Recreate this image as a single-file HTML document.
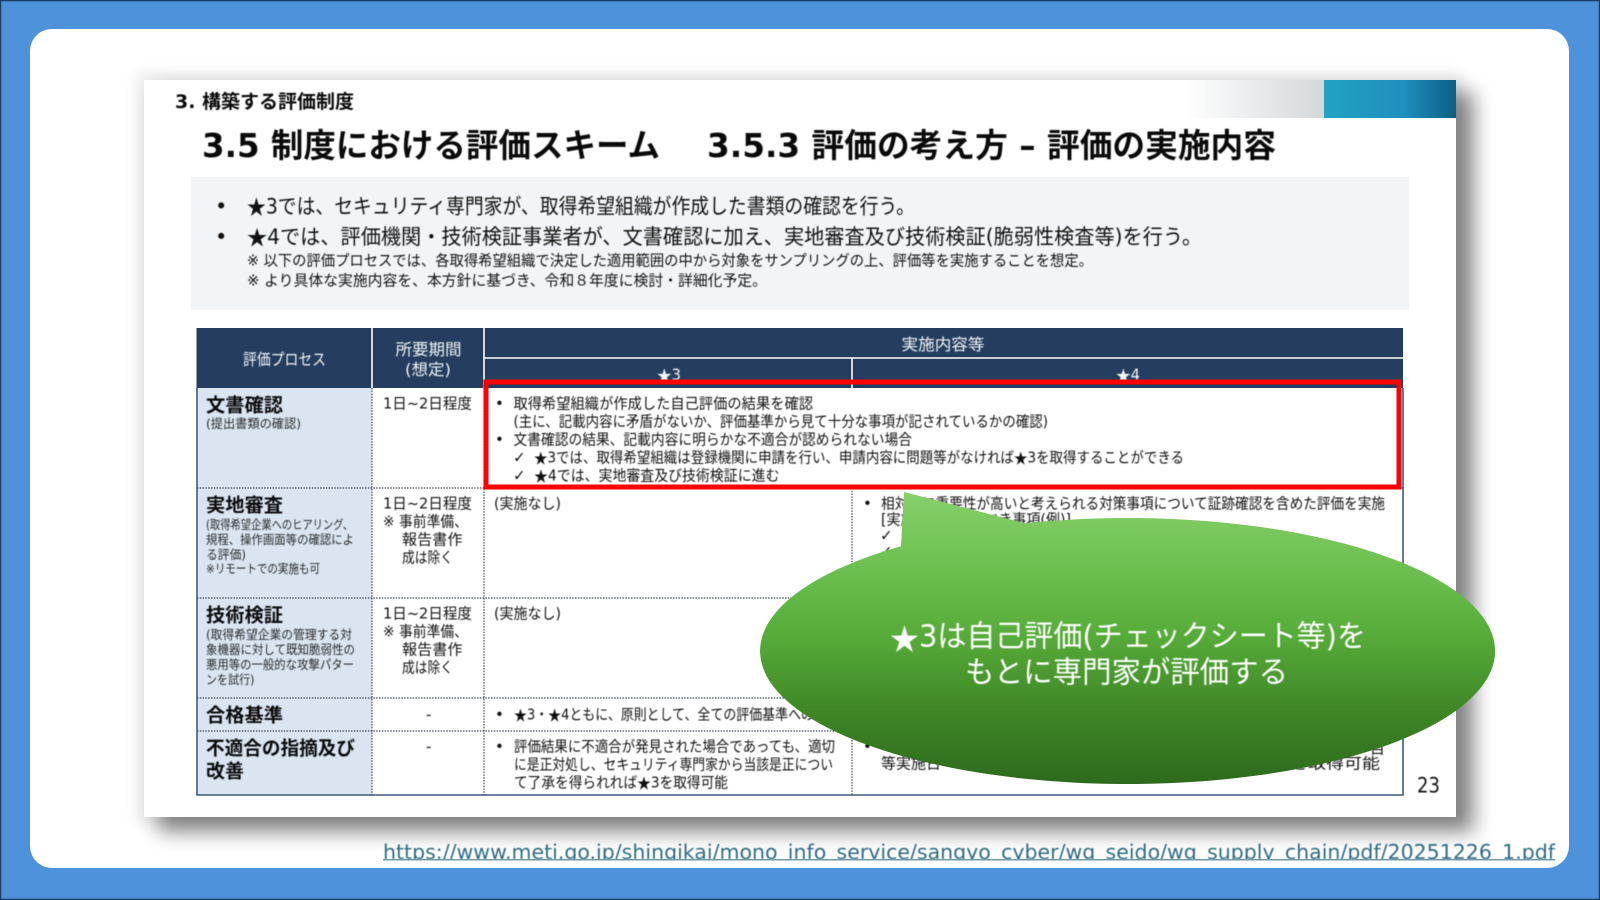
<!DOCTYPE html>
<html lang="ja"><head><meta charset="utf-8"><title>評価スキーム</title>
<style>
html,body{margin:0;padding:0;background:#4d92da}
svg{display:block}
text{font-family:"DejaVu Sans","Noto Sans CJK JP",sans-serif;fill:#111;white-space:pre}
.b{font-weight:700;fill:#0a0a0a}
.s{fill:#2a2a2a}
.w{fill:#f2f5f8}
.wb{fill:#fff}
.u{font-family:"DejaVu Sans",sans-serif;fill:#2f6b82}
.soft{filter:blur(.4px)}
tspan.n{font-family:"Noto Sans CJK JP",sans-serif}
</style></head><body>
<svg width="1600" height="900" viewBox="0 0 1600 900" xmlns="http://www.w3.org/2000/svg">
<defs>
<linearGradient id="gh" x1="0" x2="1" y1="0" y2="0"><stop offset="0" stop-color="#fff"/><stop offset="1" stop-color="#d4d7da"/></linearGradient>
<linearGradient id="gt" x1="0" x2="1" y1="0" y2="0"><stop offset="0" stop-color="#22a2c2"/><stop offset=".6" stop-color="#1f8fbd"/><stop offset="1" stop-color="#0d5f84"/></linearGradient>
<linearGradient id="gb" gradientUnits="userSpaceOnUse" x1="0" x2="0" y1="492" y2="785"><stop offset="0" stop-color="#87d06a"/><stop offset=".3" stop-color="#68bd4c"/><stop offset=".5" stop-color="#55aa38"/><stop offset=".75" stop-color="#3f8626"/><stop offset="1" stop-color="#2d6a1d"/></linearGradient>
<filter id="f1" x="-10%" y="-10%" width="120%" height="120%"><feGaussianBlur stdDeviation="10"/></filter>
<filter id="f2" x="-10%" y="-10%" width="120%" height="120%"><feGaussianBlur stdDeviation="7"/></filter>
</defs>
<rect width="1600" height="900" fill="#4d92da"/>
<rect x=".5" y=".5" width="1599" height="899" fill="none" stroke="#1f3f60" stroke-width="1.5"/>
<rect x="30" y="29" width="1539" height="839" rx="22" fill="#fff"/>
<rect x="136" y="72" width="1326" height="752" fill="#000" opacity=".08" filter="url(#f2)"/>
<rect x="158" y="92" width="1316" height="740" fill="#000" opacity=".46" filter="url(#f1)"/>
<rect x="144" y="80" width="1312" height="737" fill="#fff"/>
<rect x="1185" y="80" width="139" height="38" fill="url(#gh)"/>
<rect x="1324" y="80" width="132" height="38" fill="url(#gt)"/>
<rect x="191" y="177" width="1218" height="133" fill="#f2f5f7"/>

<!-- table -->
<rect x="196.5" y="328" width="1206.5" height="60" fill="#253e5f"/>
<rect x="196.5" y="388" width="175.5" height="407" fill="#dbe5f2"/>
<g fill="none" stroke="#fff" stroke-width="1.6">
<path d="M372 328V388M484 328V388M852 358V388M484 358H1403"/>
</g>
<g fill="none" stroke="#3e4a5c" stroke-width="1.2" stroke-dasharray="1.5 1.3">
<path d="M372 388V795M484 388V795M852 488V795"/>
<path d="M197 488H1403M197 598H1403M197 698H1403M197 731H1403"/>
</g>
<path d="M197 388V795H1403V388" fill="none" stroke="#41597a" stroke-width="1.6"/>

<g class="soft" transform="translate(0 .4)">
<text x="175" y="101.5" dominant-baseline="central" font-size="19" class="b" textLength="179" lengthAdjust="spacingAndGlyphs">3. 構築する評価制度</text>
<text x="202" y="145" dominant-baseline="central" font-size="33" class="b" textLength="458" lengthAdjust="spacingAndGlyphs">3.5 制度における評価スキーム</text>
<text x="707" y="145" dominant-baseline="central" font-size="33" class="b" textLength="569" lengthAdjust="spacingAndGlyphs">3.5.3 評価の考え方 – 評価の実施内容</text>

<text x="215" y="206" dominant-baseline="central" font-size="21">•</text>
<text x="247" y="206" dominant-baseline="central" font-size="21" textLength="668" lengthAdjust="spacingAndGlyphs"><tspan class="n">★</tspan>3では、セキュリティ専門家が、取得希望組織が作成した書類の確認を行う。</text>
<text x="215" y="236.5" dominant-baseline="central" font-size="21">•</text>
<text x="247" y="236.5" dominant-baseline="central" font-size="21" textLength="955" lengthAdjust="spacingAndGlyphs"><tspan class="n">★</tspan>4では、評価機関・技術検証事業者が、文書確認に加え、実地審査及び技術検証(脆弱性検査等)を行う。</text>
<text x="247" y="260" dominant-baseline="central" font-size="15" textLength="846" lengthAdjust="spacingAndGlyphs">※ 以下の評価プロセスでは、各取得希望組織で決定した適用範囲の中から対象をサンプリングの上、評価等を実施することを想定。</text>
<text x="247" y="280" dominant-baseline="central" font-size="15" textLength="520" lengthAdjust="spacingAndGlyphs">※ より具体な実施内容を、本方針に基づき、令和８年度に検討・詳細化予定。</text>

<text x="243" y="359" dominant-baseline="central" font-size="16" class="w" textLength="83" lengthAdjust="spacingAndGlyphs">評価プロセス</text>
<text x="395.5" y="349" dominant-baseline="central" font-size="16" class="w" textLength="66" lengthAdjust="spacingAndGlyphs">所要期間</text>
<text x="405" y="369" dominant-baseline="central" font-size="16" class="w" textLength="46" lengthAdjust="spacingAndGlyphs">(想定)</text>
<text x="901.5" y="344" dominant-baseline="central" font-size="16" class="w" textLength="83" lengthAdjust="spacingAndGlyphs">実施内容等</text>
<text x="657" y="374" dominant-baseline="central" font-size="16" class="w" textLength="24" lengthAdjust="spacingAndGlyphs"><tspan class="n">★</tspan>3</text>
<text x="1116" y="374" dominant-baseline="central" font-size="16" class="w" textLength="24" lengthAdjust="spacingAndGlyphs"><tspan class="n">★</tspan>4</text>

<!-- row 1 -->
<text x="206" y="405" dominant-baseline="central" font-size="19" class="b" textLength="77" lengthAdjust="spacingAndGlyphs">文書確認</text>
<text x="206" y="423" dominant-baseline="central" font-size="12.5" class="s" textLength="95" lengthAdjust="spacingAndGlyphs">(提出書類の確認)</text>
<text x="383" y="403" dominant-baseline="central" font-size="15" textLength="89" lengthAdjust="spacingAndGlyphs">1日~2日程度</text>
<text x="495" y="403" dominant-baseline="central" font-size="15">•</text>
<text x="513.5" y="403" dominant-baseline="central" font-size="15" textLength="299.5" lengthAdjust="spacingAndGlyphs">取得希望組織が作成した自己評価の結果を確認</text>
<text x="513.5" y="421" dominant-baseline="central" font-size="15" textLength="534.5" lengthAdjust="spacingAndGlyphs">(主に、記載内容に矛盾がないか、評価基準から見て十分な事項が記されているかの確認)</text>
<text x="495" y="439" dominant-baseline="central" font-size="15">•</text>
<text x="513.5" y="439" dominant-baseline="central" font-size="15" textLength="398.5" lengthAdjust="spacingAndGlyphs">文書確認の結果、記載内容に明らかな不適合が認められない場合</text>
<text x="513" y="457" dominant-baseline="central" font-size="15">✓</text>
<text x="534" y="457" dominant-baseline="central" font-size="15" textLength="650" lengthAdjust="spacingAndGlyphs"><tspan class="n">★</tspan>3では、取得希望組織は登録機関に申請を行い、申請内容に問題等がなければ<tspan class="n">★</tspan>3を取得することができる</text>
<text x="513" y="475" dominant-baseline="central" font-size="15">✓</text>
<text x="534" y="475" dominant-baseline="central" font-size="15" textLength="245.5" lengthAdjust="spacingAndGlyphs"><tspan class="n">★</tspan>4では、実地審査及び技術検証に進む</text>

<!-- row 2 -->
<text x="206" y="505" dominant-baseline="central" font-size="19" class="b" textLength="77" lengthAdjust="spacingAndGlyphs">実地審査</text>
<text x="206" y="524" dominant-baseline="central" font-size="12.5" class="s" textLength="147" lengthAdjust="spacingAndGlyphs">(取得希望企業へのヒアリング、</text>
<text x="206" y="539" dominant-baseline="central" font-size="12.5" class="s" textLength="148" lengthAdjust="spacingAndGlyphs">規程、操作画面等の確認によ</text>
<text x="206" y="554" dominant-baseline="central" font-size="12.5" class="s" textLength="40" lengthAdjust="spacingAndGlyphs">る評価)</text>
<text x="206" y="568" dominant-baseline="central" font-size="12.5" class="s" textLength="114" lengthAdjust="spacingAndGlyphs">※リモートでの実施も可</text>
<text x="383" y="503" dominant-baseline="central" font-size="15" textLength="89" lengthAdjust="spacingAndGlyphs">1日~2日程度</text>
<text x="383" y="521" dominant-baseline="central" font-size="15" textLength="85" lengthAdjust="spacingAndGlyphs">※ 事前準備、</text>
<text x="402" y="539" dominant-baseline="central" font-size="15" textLength="60.5" lengthAdjust="spacingAndGlyphs">報告書作</text>
<text x="402" y="557" dominant-baseline="central" font-size="15" textLength="51" lengthAdjust="spacingAndGlyphs">成は除く</text>
<text x="494" y="503" dominant-baseline="central" font-size="15" textLength="67" lengthAdjust="spacingAndGlyphs">(実施なし)</text>
<text x="863" y="503" dominant-baseline="central" font-size="15">•</text>
<text x="881" y="503" dominant-baseline="central" font-size="15" textLength="504" lengthAdjust="spacingAndGlyphs">相対的に重要性が高いと考えられる対策事項について証跡確認を含めた評価を実施</text>
<text x="881" y="519" dominant-baseline="central" font-size="15" textLength="190" lengthAdjust="spacingAndGlyphs">[実施する確認すべき事項(例)]</text>
<text x="880" y="535" dominant-baseline="central" font-size="15">✓</text>
<text x="880" y="551" dominant-baseline="central" font-size="15">✓</text>

<!-- row 3 -->
<text x="206" y="615" dominant-baseline="central" font-size="19" class="b" textLength="77" lengthAdjust="spacingAndGlyphs">技術検証</text>
<text x="206" y="634" dominant-baseline="central" font-size="12.5" class="s" textLength="146" lengthAdjust="spacingAndGlyphs">(取得希望企業の管理する対</text>
<text x="206" y="649" dominant-baseline="central" font-size="12.5" class="s" textLength="149" lengthAdjust="spacingAndGlyphs">象機器に対して既知脆弱性の</text>
<text x="206" y="664" dominant-baseline="central" font-size="12.5" class="s" textLength="148" lengthAdjust="spacingAndGlyphs">悪用等の一般的な攻撃パター</text>
<text x="206" y="679" dominant-baseline="central" font-size="12.5" class="s" textLength="48.5" lengthAdjust="spacingAndGlyphs">ンを試行)</text>
<text x="383" y="613" dominant-baseline="central" font-size="15" textLength="89" lengthAdjust="spacingAndGlyphs">1日~2日程度</text>
<text x="383" y="631" dominant-baseline="central" font-size="15" textLength="85" lengthAdjust="spacingAndGlyphs">※ 事前準備、</text>
<text x="402" y="649" dominant-baseline="central" font-size="15" textLength="60.5" lengthAdjust="spacingAndGlyphs">報告書作</text>
<text x="402" y="667" dominant-baseline="central" font-size="15" textLength="51" lengthAdjust="spacingAndGlyphs">成は除く</text>
<text x="494" y="613" dominant-baseline="central" font-size="15" textLength="67" lengthAdjust="spacingAndGlyphs">(実施なし)</text>

<!-- row 4 -->
<text x="206" y="715" dominant-baseline="central" font-size="19" class="b" textLength="77" lengthAdjust="spacingAndGlyphs">合格基準</text>
<text x="426" y="714" dominant-baseline="central" font-size="15">-</text>
<text x="495" y="714" dominant-baseline="central" font-size="15">•</text>
<text x="514" y="714" dominant-baseline="central" font-size="15" textLength="300" lengthAdjust="spacingAndGlyphs"><tspan class="n">★</tspan>3・<tspan class="n">★</tspan>4ともに、原則として、全ての評価基準への</text>

<!-- row 5 -->
<text x="206" y="748" dominant-baseline="central" font-size="19" class="b" textLength="149" lengthAdjust="spacingAndGlyphs">不適合の指摘及び</text>
<text x="206" y="771" dominant-baseline="central" font-size="19" class="b" textLength="38" lengthAdjust="spacingAndGlyphs">改善</text>
<text x="426" y="746" dominant-baseline="central" font-size="15">-</text>
<text x="495" y="746" dominant-baseline="central" font-size="15">•</text>
<text x="514" y="746" dominant-baseline="central" font-size="15" textLength="321" lengthAdjust="spacingAndGlyphs">評価結果に不適合が発見された場合であっても、適切</text>
<text x="514" y="764" dominant-baseline="central" font-size="15" textLength="319" lengthAdjust="spacingAndGlyphs">に是正対処し、セキュリティ専門家から当該是正につい</text>
<text x="514" y="782" dominant-baseline="central" font-size="15" textLength="214" lengthAdjust="spacingAndGlyphs">て了承を得られれば<tspan class="n">★</tspan>3を取得可能</text>
<text x="863" y="746" dominant-baseline="central" font-size="15">•</text>
<text x="881" y="763" dominant-baseline="central" font-size="15" textLength="60" lengthAdjust="spacingAndGlyphs">等実施日</text>
<text x="1290" y="763" dominant-baseline="central" font-size="15" textLength="90" lengthAdjust="spacingAndGlyphs">を取得可能</text>
<text x="1370" y="748" dominant-baseline="central" font-size="15">目</text>

<text x="1417" y="785" dominant-baseline="central" font-size="21" textLength="23" lengthAdjust="spacingAndGlyphs">23</text>
</g>

<!-- red box -->
<rect x="486" y="382" width="913" height="105" fill="none" stroke="#f00" stroke-width="5"/>

<!-- bubble -->
<path d="M904 492L1025 523.3A367.5 133 0 1 1 901 546.3Z" fill="url(#gb)"/>
<g class="soft">
<text x="890" y="637" dominant-baseline="central" font-size="30" class="wb" textLength="476" lengthAdjust="spacingAndGlyphs"><tspan class="n">★</tspan>3は自己評価(チェックシート等)を</text>
<text x="965" y="673" dominant-baseline="central" font-size="30" class="wb" textLength="323" lengthAdjust="spacingAndGlyphs">もとに専門家が評価する</text>
</g>

<!-- url: descenders are cropped at the underline, as in the reference -->
<g class="soft">
<text x="383" y="852" dominant-baseline="central" font-size="20" class="u" textLength="1172" lengthAdjust="spacingAndGlyphs">https://www.meti.go.jp/shingikai/mono_info_service/sangyo_cyber/wg_seido/wg_supply_chain/pdf/20251226_1.pdf</text>
</g>
<rect x="383" y="860" width="1172" height="6" fill="#fff"/>
<rect x="383" y="859" width="1172" height="1.5" fill="#6f9aa8"/>
</svg>
</body></html>
